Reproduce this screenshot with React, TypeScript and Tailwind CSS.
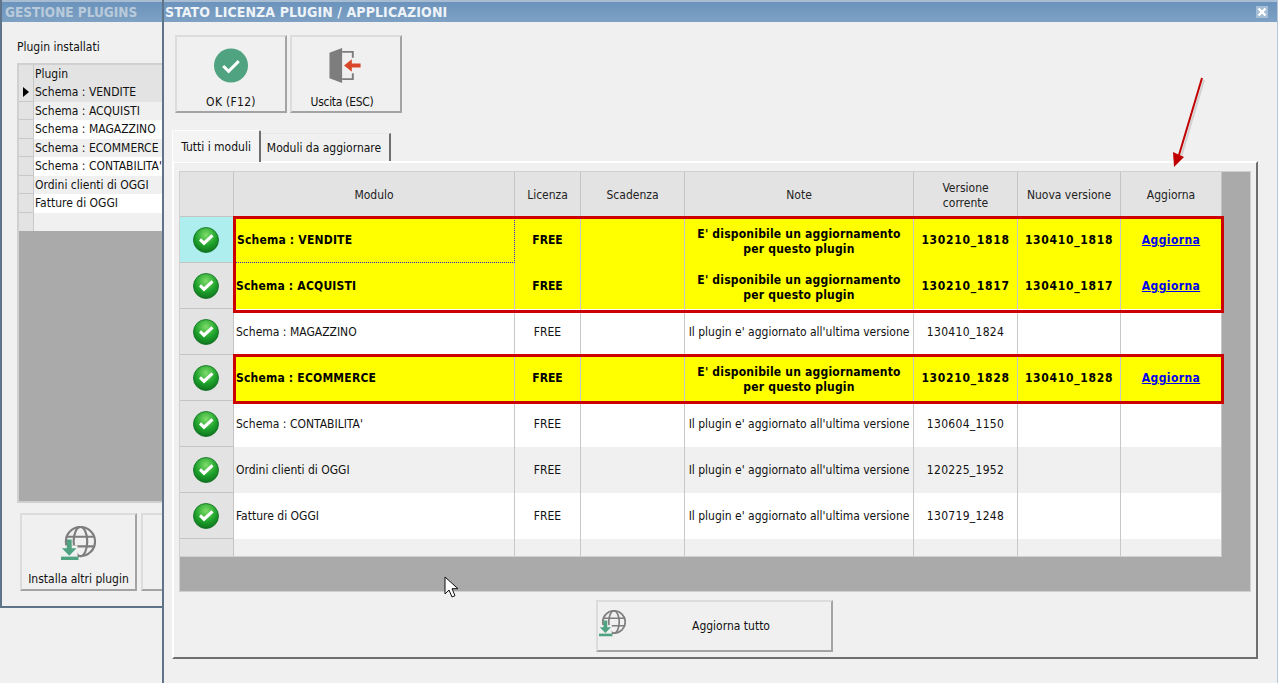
const FONT = "font-['DejaVu_Sans_Condensed','DejaVu_Sans',sans-serif]"

const updateNote = "E' disponibile un aggiornamento per questo plugin"
const okNote = "Il plugin e' aggiornato all'ultima versione"

const rows = [
  { name: "Schema : VENDITE", note: updateNote, current: "130210_1818", next: "130410_1818", bg: "bg-[#ffff00]", update: true, active: true },
  { name: "Schema : ACQUISTI", note: updateNote, current: "130210_1817", next: "130410_1817", bg: "bg-[#ffff00]", update: true },
  { name: "Schema : MAGAZZINO", note: okNote, current: "130410_1824", next: "", bg: "bg-white" },
  { name: "Schema : ECOMMERCE", note: updateNote, current: "130210_1828", next: "130410_1828", bg: "bg-[#ffff00]", update: true },
  { name: "Schema : CONTABILITA'", note: okNote, current: "130604_1150", next: "", bg: "bg-white" },
  { name: "Ordini clienti di OGGI", note: okNote, current: "120225_1952", next: "", bg: "bg-[#f0f0f0]" },
  { name: "Fatture di OGGI", note: okNote, current: "130719_1248", next: "", bg: "bg-white" },
]

const installed = [
  { name: "Schema : VENDITE", bg: "bg-[#e3e3e3]", mark: true },
  { name: "Schema : ACQUISTI", bg: "bg-[#f0f0f0]" },
  { name: "Schema : MAGAZZINO", bg: "bg-white" },
  { name: "Schema : ECOMMERCE", bg: "bg-[#f0f0f0]" },
  { name: "Schema : CONTABILITA'", bg: "bg-white" },
  { name: "Ordini clienti di OGGI", bg: "bg-[#f0f0f0]" },
  { name: "Fatture di OGGI", bg: "bg-white" },
]

const cols = "grid w-[1042px] grid-cols-[54px_281px_66px_104px_229px_104px_103px_101px]"
const btn = "flex flex-col items-center border-2 border-t-[#dcdcdc] border-l-[#dcdcdc] border-r-[#a3a3a3] border-b-[#a3a3a3] bg-[#f0f0f0]"

function RowCheck() {
  return (
    <svg width="28" height="28" viewBox="0 0 28 28" className="mr-[2px]">
      <defs>
        <radialGradient id="glossy" cx="50%" cy="30%" r="75%">
          <stop offset="0%" stopColor="#7fdc6a" />
          <stop offset="55%" stopColor="#1fa32c" />
          <stop offset="100%" stopColor="#0b6b1c" />
        </radialGradient>
      </defs>
      <circle cx="14" cy="14" r="12.5" fill="url(#glossy)" stroke="#0f6d20" strokeWidth="0.8" />
      <path d="M7 14.500l5 5 9.500-9-2-2.200-7.500 6.700-3-2.700z" fill="#fff" />
    </svg>
  )
}

function GlobeIcon({ size }: { size: number }) {
  return (
    <svg width={size} height={size} viewBox="0 0 36 36" fill="none">
      <g stroke="#7d7d7d" strokeWidth="2.2">
        <circle cx="20" cy="16" r="15" />
        <ellipse cx="20" cy="16" rx="7" ry="15" />
        <path d="M5 11h30M5 21h30" />
      </g>
      <path d="M0 20h17v16H0z" fill="#f0f0f0" />
      <path d="M6 14h5v9h5l-7.500 7.500L1 23h5z" fill="#4fa381" />
      <path d="M0 31.500h18V35H0z" fill="#4fa381" />
    </svg>
  )
}

function ExitIcon() {
  return (
    <svg width="36" height="36" viewBox="0 0 36 36" fill="none">
      <path d="M14 4h11v6M25 26v6H14" stroke="#7d7d7d" strokeWidth="2" />
      <path d="M1 5L14 0v36L1 31z" fill="#7d7d7d" />
      <path d="M16 18l8-6.500V16h9v4h-9v4.500z" fill="#d9472b" />
    </svg>
  )
}

function Cursor() {
  return (
    <svg width="16" height="23" viewBox="0 0 16 23">
      <path d="M1 1v17l4-4 3 7 3-1.300-3-7h6z" fill="#fff" stroke="#111" strokeWidth="1" />
    </svg>
  )
}

function Arrow() {
  return (
    <svg width="44" height="100" viewBox="0 0 44 100" fill="none">
      <path d="M30 1L7 78" stroke="#8a8a8a" strokeOpacity="0.3" strokeWidth="2" transform="translate(2 2)" />
      <path d="M30 1L7 78" stroke="#c00000" strokeWidth="2" />
      <path d="M1 75l11 5-10 10z" fill="#c00000" />
    </svg>
  )
}

function TitleBar({ title, faded }: { title: string; faded?: boolean }) {
  return (
    <div className={`flex h-[22px] shrink-0 items-center justify-between border-t-2 border-[#a9bdd2] bg-gradient-to-b from-[#6b93bc] to-[#7ea1c4] font-bold ${faded ? "pl-[3px] text-[13.500px] text-[#b9cadb]" : "pl-[1px] pr-[9px] text-[14px] tracking-[0.1px] text-[#eef3f8]"}`}>
      <span>{title}</span>
      {!faded && (
        <span className="flex h-[12px] w-[12px] items-center justify-center bg-[#a5bdd6]">
          <svg width="10" height="10" viewBox="0 0 10 10"><path d="M1.500 1.500l7 7M8.500 1.500l-7 7" stroke="#fff" strokeWidth="2.400" /></svg>
        </span>
      )}
    </div>
  )
}

export default function App() {
  return (
    <div className={`relative h-[683px] w-[1278px] overflow-hidden bg-[#f0f0f0] text-[12px] text-[#111] ${FONT}`}>
      {/* finestra dietro */}
      <div className="absolute left-0 top-0 flex h-[608px] w-[164px] flex-col border-b-2 border-l-2 border-[#5f7489]">
        <TitleBar title="GESTIONE PLUGINS" faded />
        <div className="flex min-h-0 flex-1 flex-col pl-[15px]">
          <div className="mt-[17px] h-[16px] leading-[16px]">Plugin installati</div>
          <div className="mt-[8px] flex h-[440px] flex-col border-2 border-[#d0d0d0] border-r-0 bg-[#aaaaaa]">
            <div className="flex h-[18px] bg-[#e3e3e3] leading-[18px]">
              <div className="w-[15px] border-r border-[#c8c8c8]" />
              <div className="pl-[1px]">Plugin</div>
            </div>
            {installed.map((r) => (
              <div key={r.name} className={`flex h-[18.500px] whitespace-nowrap leading-[18px] ${r.bg}`}>
                <div className="flex w-[15px] shrink-0 items-center justify-center border-b border-r border-[#c8c8c8] bg-[#e3e3e3]">
                  {r.mark && <div className="h-0 w-0 border-y-[5px] border-l-[6px] border-y-transparent border-l-black" />}
                </div>
                <div className="pl-[1px]">{r.name}</div>
              </div>
            ))}
            <div className="flex h-[18px] bg-[#f0f0f0]">
              <div className="w-[15px] border-r border-[#c8c8c8] bg-[#e3e3e3]" />
            </div>
          </div>
          <div className="mt-[10px] flex gap-[4px] pl-[3px]">
            <div className={`${btn} h-[78px] w-[117px] shrink-0 pt-[11px]`}>
              <GlobeIcon size={35} />
              <div className="mt-[9px] whitespace-nowrap">Installa altri plugin</div>
            </div>
            <div className={`${btn} h-[78px] w-[60px] shrink-0`} />
          </div>
        </div>
      </div>

      {/* finestra principale */}
      <div className="absolute left-[162px] top-0 flex h-[683px] w-[1116px] flex-col border-l-2 border-r border-[#5f7489] border-r-[#b4c6d8] bg-[#f0f0f0]">
        <TitleBar title="STATO LICENZA PLUGIN / APPLICAZIONI" />
        <div className="flex gap-[3px] pl-[11px] pt-[13px]">
          <div className={`${btn} h-[78px] w-[112px] pt-[11px]`}>
            <svg width="36" height="36" viewBox="0 0 36 36" fill="none">
              <circle cx="18" cy="18" r="17.500" fill="#4fa381" />
              <path d="M10 18.500l5.500 5.500L26 13.500" stroke="#fff" strokeWidth="3" />
            </svg>
            <div className="mt-[10px] tracking-[0.3px]">OK (F12)</div>
          </div>
          <div className={`${btn} h-[78px] w-[112px] pt-[11px]`}>
            <ExitIcon />
            <div className="mr-[8px] mt-[10px] tracking-[-0.3px]">Uscita (ESC)</div>
          </div>
        </div>

        <div className="ml-[8px] mt-[17px] flex items-end">
          <div className="relative z-10 -mb-px flex h-[32px] w-[89px] items-center justify-center rounded-t-[2px] border-l border-r-2 border-t border-white border-r-[#6f6f6f] bg-[#f4f4f4]">Tutti i moduli</div>
          <div className="flex h-[28px] w-[130px] items-center justify-center border-r-2 border-t border-[#e8e8e8] border-r-[#6f6f6f] bg-[#f0f0f0] pr-[2px]">Moduli da aggiornare</div>
        </div>

        <div className="ml-[8px] flex h-[498px] w-[1086px] flex-col items-start border-2 border-white border-b-[#6f6f6f] border-r-[#6f6f6f] pl-[5px] pt-[8px]">
          <div className="relative h-[421px] w-[1072px] border border-[#d0d0d0] bg-[#aaaaaa]">
            <div className={`${cols} h-[45px] text-center text-[#222]`}>
              <div className="border-b border-r border-[#c4c4c4] bg-[#e3e3e3]" />
              {["Modulo", "Licenza", "Scadenza", "Note", "Versione corrente", "Nuova versione", "Aggiorna"].map((h) => (
                <div key={h} className="flex items-center justify-center border-b border-r border-[#c4c4c4] bg-[#e3e3e3] px-[6px] pt-[2px] leading-[15px]">
                  <span className={h === "Versione corrente" ? "mt-[2px] w-[60px]" : ""}>{h}</span>
                </div>
              ))}
            </div>
            {rows.map((r) => {
              const line = "border-r border-[#c8c8c8]"
              const weight = r.update ? "font-bold text-black" : ""
              const digits = r.update ? "tracking-[0.7px]" : "tracking-[0.3px]"
              return (
                <div key={r.name} className={`${cols} h-[46px] ${r.bg} ${weight} text-center`}>
                  <div className={`flex items-center justify-center border-b border-r border-[#c4c4c4] ${r.active ? "bg-[#aeeeee]" : "bg-[#e3e3e3]"}`}>
                    <RowCheck />
                  </div>
                  <div className={`flex items-center pl-[2px] text-left ${r.update ? "tracking-[0.2px]" : ""} ${r.active ? "border border-dotted border-[#3030c0]" : line}`}>{r.name}</div>
                  <div className={`flex items-center justify-center ${line}`}>FREE</div>
                  <div className={line} />
                  <div className={`flex items-center justify-center px-[3px] leading-[15px] ${r.update ? "pt-[3px] tracking-[0.2px]" : ""} ${line}`}>
                    <span className={r.update ? "w-[214px]" : "whitespace-nowrap"}>{r.note}</span>
                  </div>
                  <div className={`flex items-center justify-center ${digits} ${line}`}>{r.current}</div>
                  <div className={`flex items-center justify-center ${digits} ${line}`}>{r.next}</div>
                  <div className={`flex items-center justify-center ${line}`}>
                    {r.update && <span className="tracking-[0.4px] text-[#0000ee] underline">Aggiorna</span>}
                  </div>
                </div>
              )
            })}
            <div className={`${cols} h-[18px] border-b border-[#d0d0d0] bg-[#f0f0f0]`}>
              <div className="border-r border-[#c4c4c4] bg-[#e3e3e3]" />
              <div className="border-r border-[#c8c8c8]" />
              <div className="border-r border-[#c8c8c8]" />
              <div className="border-r border-[#c8c8c8]" />
              <div className="border-r border-[#c8c8c8]" />
              <div className="border-r border-[#c8c8c8]" />
              <div className="border-r border-[#c8c8c8]" />
              <div className="border-r border-[#c8c8c8]" />
            </div>

            {/* riquadri rossi */}
            <div className="absolute left-[53px] top-[44px] h-[97px] w-[991px] border-[3px] border-[#cc0000]" />
            <div className="absolute left-[53px] top-[182px] h-[50px] w-[991px] border-[3px] border-[#cc0000]" />
          </div>

          <div className={`${btn} relative ml-[417px] mt-[8px] h-[52px] w-[237px] !flex-row justify-center`}>
            <span className="absolute left-[1px] top-[8px]"><GlobeIcon size={27} /></span>
            <span className="ml-[33px] self-center">Aggiorna tutto</span>
          </div>
        </div>
      </div>

      <div className="absolute left-[1172px] top-[77px]"><Arrow /></div>
      <div className="absolute left-[444px] top-[576px]"><Cursor /></div>
    </div>
  )
}
